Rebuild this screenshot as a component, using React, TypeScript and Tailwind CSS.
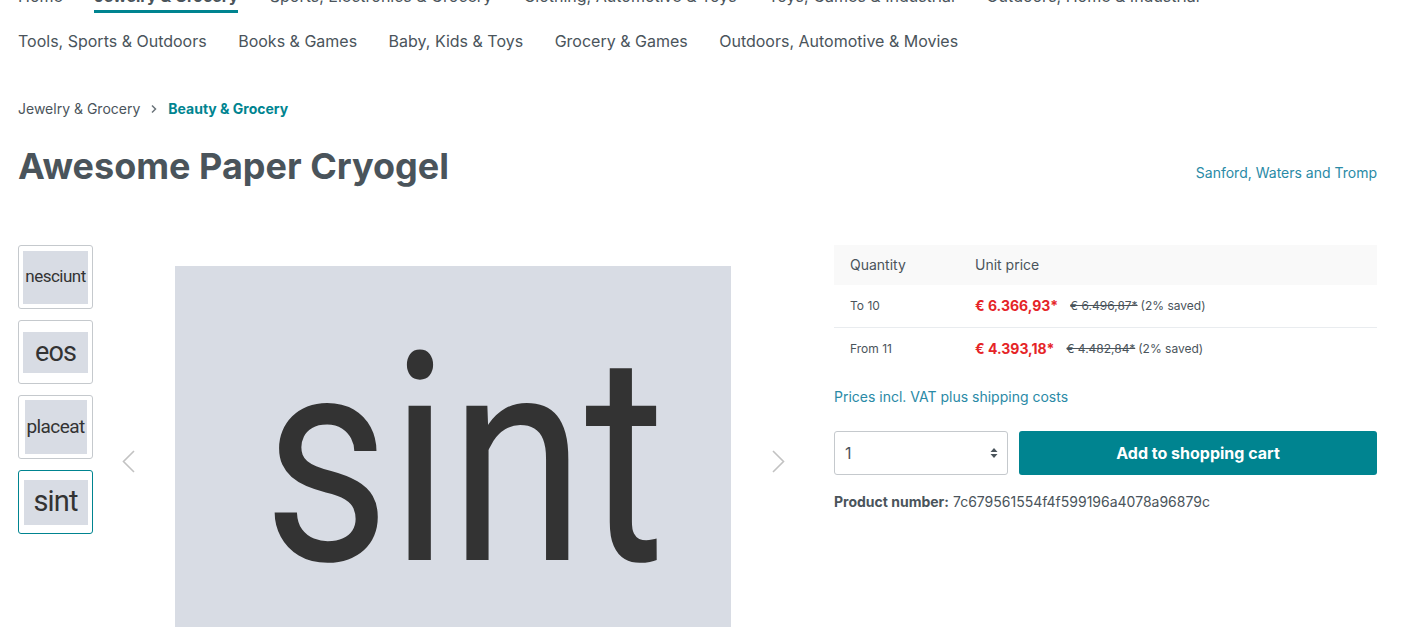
import React from 'react';

const navRows = [
  ['Home', 'Jewelry & Grocery', 'Sports, Electronics & Grocery', 'Clothing, Automotive & Toys', 'Toys, Games & Industrial', 'Outdoors, Home & Industrial'],
  ['Tools, Sports & Outdoors', 'Books & Games', 'Baby, Kids & Toys', 'Grocery & Games', 'Outdoors, Automotive & Movies'],
];

const thumbs = [
  { label: 'nesciunt', w: 'w-[65px]', h: 'h-[53px]', text: 'text-[17px]' },
  { label: 'eos', w: 'w-[65px]', h: 'h-[41px]', text: 'text-[27px]' },
  { label: 'placeat', w: 'w-[62px]', h: 'h-[54px]', text: 'text-[19px]' },
  { label: 'sint', w: 'w-[64px]', h: 'h-[45px]', text: 'text-[29px]' },
];

const prices = [
  { qty: 'To 10', price: '€ 6.366,93*', old: '€ 6.496,87*' },
  { qty: 'From 11', price: '€ 4.393,18*', old: '€ 4.482,84*' },
];

const Chevron = ({ dir }: { dir: 'left' | 'right' }) => (
  <svg width="13" height="23" viewBox="0 0 13 23" fill="none">
    <polyline
      points={dir === 'left' ? '12,1 1.5,11.5 12,22' : '1,1 11.5,11.5 1,22'}
      stroke="#c2c2c2"
      strokeWidth="1.6"
    />
  </svg>
);

const App = () => {
  return (
    <div className="min-h-screen bg-white text-[#4a545b] font-['Inter',sans-serif] pl-[18px] pr-[32px] overflow-hidden">
      {/* Main navigation */}
      <nav className="-mt-[20px] flex flex-col gap-y-3">
        {navRows.map((row, i) => (
          <div key={i} className="flex gap-x-[31.5px]">
            {row.map((item) => (
              <span
                key={item}
                className={`pt-1 pb-[2px] border-b-[3px] leading-6 text-base whitespace-nowrap ${
                  item === 'Jewelry & Grocery' && i === 0 ? 'border-[#008490] font-bold' : 'border-transparent'
                }`}
              >
                {item}
              </span>
            ))}
          </div>
        ))}
      </nav>

      {/* Breadcrumb */}
      <div className="mt-[41px] h-5 flex items-center text-sm">
        <span>Jewelry & Grocery</span>
        <svg className="mx-[10px]" width="8" height="10" viewBox="0 0 8 10" fill="none">
          <polyline points="2,1.5 5.5,5 2,8.5" stroke="#6b747a" strokeWidth="1.5" />
        </svg>
        <span className="font-bold text-[#008490]">Beauty & Grocery</span>
      </div>

      {/* Title */}
      <div className="mt-[27px] h-[41px] flex items-center justify-between">
        <h1 className="text-[36px] font-bold leading-[41px]">Awesome Paper Cryogel</h1>
        <a className="mt-3 text-sm text-[#2a8aa6]">Sanford, Waters and Tromp</a>
      </div>

      {/* Gallery + buy box */}
      <div className="mt-[58px] flex">
        <div className="w-[788px] flex shrink-0">
          <div className="w-[75px] flex flex-col gap-[11px] shrink-0">
            {thumbs.map((t, i) => (
              <div
                key={t.label}
                className={`h-[64px] rounded-[3px] border flex items-center justify-center ${
                  i === 3 ? 'border-[#008490]' : 'border-[#c5c9cd]'
                }`}
              >
                <div
                  className={`${t.w} ${t.h} bg-[#d8dce4] flex items-center justify-center text-[#333] font-['Roboto',sans-serif] ${t.text} tracking-[-0.03em] overflow-hidden`}
                >
                  {t.label}
                </div>
              </div>
            ))}
          </div>

          <div className="ml-[7px] flex-1 flex items-start pt-[21px]">
            <div className="w-[56px] h-[391px] flex items-center justify-center">
              <Chevron dir="left" />
            </div>
            <div className="flex-1 flex justify-center">
              <div className="w-[556px] h-[391px] bg-[#d8dce4] flex items-center justify-center text-[#333] font-['Roboto',sans-serif] text-[292px] leading-none overflow-hidden">
                <span className="-mt-[4px] ml-[22px] inline-block scale-x-84">sint</span>
              </div>
            </div>
            <div className="w-[56px] h-[391px] flex items-center justify-center">
              <Chevron dir="right" />
            </div>
          </div>
        </div>

        <div className="ml-[28px] flex-1">
          <div className="h-[40px] bg-[#f9f9f9] flex items-center text-sm">
            <span className="w-[141px] pl-4">Quantity</span>
            <span>Unit price</span>
          </div>
          {prices.map((p, i) => (
            <div
              key={p.qty}
              className={`flex items-center ${i === 0 ? 'h-[43px] border-b border-[#e9ecef]' : 'h-[42px]'}`}
            >
              <span className="w-[141px] pl-4 text-xs">{p.qty}</span>
              <span className="text-sm font-bold text-[#e52427]">{p.price}</span>
              <span className="ml-3 text-xs line-through">{p.old}</span>
              <span className="ml-[3px] text-xs">(2% saved)</span>
            </div>
          ))}

          <p className="mt-[17px] h-5 leading-5 text-sm text-[#2a8aa6]">Prices incl. VAT plus shipping costs</p>

          <div className="mt-[24px] flex gap-[11px]">
            <div className="w-[174px] h-[44px] border border-[#c5c9cd] rounded-[3px] flex items-center justify-between pl-[10px] pr-[9px]">
              <span className="text-base">1</span>
              <svg width="8" height="12" viewBox="0 0 8 12" fill="#4a545b">
                <polygon points="4,1 7.5,5 0.5,5" />
                <polygon points="0.5,7 7.5,7 4,11" />
              </svg>
            </div>
            <button className="flex-1 h-[44px] rounded-[3px] bg-[#008490] text-white font-bold text-base">
              Add to shopping cart
            </button>
          </div>

          <p className="mt-[17px] h-5 leading-5 text-sm">
            <span className="font-bold">Product number:</span> 7c679561554f4f599196a4078a96879c
          </p>
        </div>
      </div>
    </div>
  );
};

export default App;
